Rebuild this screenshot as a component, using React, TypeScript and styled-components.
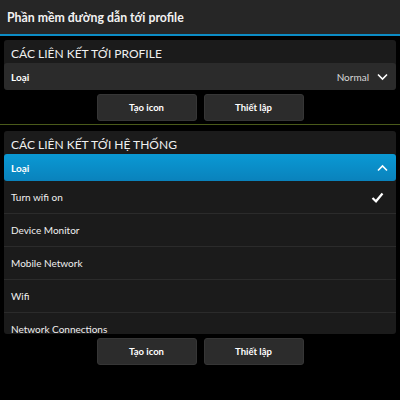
import React from "react";
import styled, { createGlobalStyle } from "styled-components";

const Global = createGlobalStyle`
  html, body {
    margin: 0;
    padding: 0;
    background: #000;
  }
  body {
    font-family: "Lato", "Open Sans", sans-serif;
    color: #fff;
  }
`;

const Page = styled.div`
  width: 400px;
  height: 400px;
  overflow: hidden;
  background: #000;
  display: flex;
  flex-direction: column;
`;

const TitleBar = styled.div`
  height: 34px;
  flex-shrink: 0;
  background: #262626;
  border-bottom: 2px solid #0c8bc4;
  display: flex;
  align-items: center;
  padding: 0 7px;
  font-size: 12.3px;
  font-weight: 700;
  color: #f2f2f2;
`;

const Body = styled.div`
  padding: 4px 4px 0;
  display: flex;
  flex-direction: column;
`;

const Panel = styled.div`
  background: #1b1b1b;
  border-radius: 3px;
  overflow: hidden;
`;

const Header = styled.div`
  height: 23px;
  display: flex;
  align-items: flex-end;
  padding: 0 7px 2px;
  box-sizing: border-box;
  font-size: 12px;
  color: #f0f0f0;
`;

const DropRow = styled.div<{ $open?: boolean }>`
  height: 27px;
  display: flex;
  align-items: center;
  justify-content: space-between;
  padding: 0 8px 0 7px;
  border-radius: 3px;
  font-size: 10px;
  font-weight: 700;
  color: #fff;
  background: ${(p) =>
    p.$open ? "linear-gradient(#0a99d4, #0a82bc)" : "#2b2b2b"};
`;

const DropValue = styled.div`
  display: flex;
  align-items: center;
  gap: 8px;
  font-weight: 400;
  color: #d8d8d8;
`;

const List = styled.div`
  height: 153px;
  overflow: hidden;
`;

const Item = styled.div`
  height: 33px;
  box-sizing: border-box;
  border-bottom: 1px solid #2b2b2b;
  display: flex;
  align-items: center;
  justify-content: space-between;
  padding: 0 12px 0 7px;
  font-size: 10px;
  color: #f0f0f0;
`;

const ButtonRow = styled.div<{ $top: number }>`
  display: flex;
  justify-content: center;
  gap: 7px;
  padding-top: ${(p) => p.$top}px;
`;

const Button = styled.button`
  width: 100px;
  height: 27px;
  border-radius: 3px;
  border: 1px solid #363636;
  background: #2c2c2c;
  color: #fff;
  font-family: "Lato", "Open Sans", sans-serif;
  font-size: 9.5px;
  font-weight: 700;
`;

const Divider = styled.div`
  height: 1px;
  background: #4a5a1a;
  margin: 3px -4px 6px;
`;

const Chevron = ({ up }: { up?: boolean }) => (
  <svg width="11" height="8" viewBox="0 0 11 8">
    <path
      d={up ? "M1 6.5 L5.5 2 L10 6.5" : "M1 1.5 L5.5 6 L10 1.5"}
      fill="none"
      stroke="#fff"
      strokeWidth="1.6"
    />
  </svg>
);

const Check = () => (
  <svg width="13" height="11" viewBox="0 0 13 11">
    <path d="M1.5 6 L5 9.3 L11.5 1.5" fill="none" stroke="#fff" strokeWidth="2.2" />
  </svg>
);

const items = [
  "Turn wifi on",
  "Device Monitor",
  "Mobile Network",
  "Wifi",
  "Network Connections",
];

export default function App() {
  return (
    <Page>
      <Global />
      <TitleBar>Phần mềm đường dẫn tới profile</TitleBar>
      <Body>
        <Panel>
          <Header>CÁC LIÊN KẾT TỚI PROFILE</Header>
          <DropRow>
            <span>Loại</span>
            <DropValue>
              Normal <Chevron />
            </DropValue>
          </DropRow>
        </Panel>
        <ButtonRow $top={4}>
          <Button>Tạo icon</Button>
          <Button>Thiết lập</Button>
        </ButtonRow>
        <Divider />
        <Panel>
          <Header>CÁC LIÊN KẾT TỚI HỆ THỐNG</Header>
          <DropRow $open>
            <span>Loại</span>
            <Chevron up />
          </DropRow>
          <List>
            {items.map((t, i) => (
              <Item key={t}>
                <span>{t}</span>
                {i === 0 && <Check />}
              </Item>
            ))}
          </List>
        </Panel>
        <ButtonRow $top={4}>
          <Button>Tạo icon</Button>
          <Button>Thiết lập</Button>
        </ButtonRow>
      </Body>
    </Page>
  );
}
